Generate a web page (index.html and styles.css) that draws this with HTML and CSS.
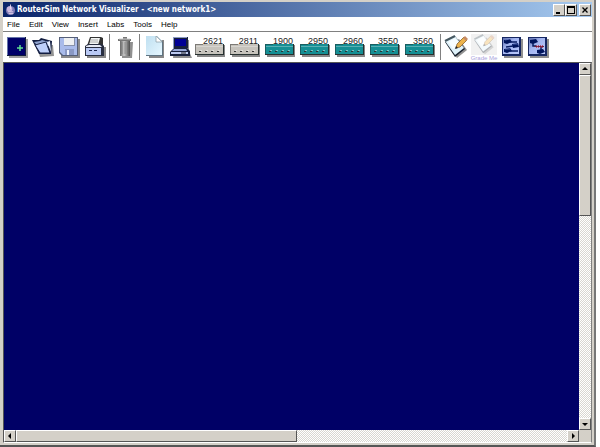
FILE: index.html
```html
<!DOCTYPE html>
<html lang="en">
<head>
<meta charset="utf-8">
<title>RouterSim Network Visualizer</title>
<link rel="stylesheet" href="styles.css">
</head>
<body>
<svg class="defs" aria-hidden="true">
  <defs>
    <linearGradient id="tile" x1="0" y1="0" x2="1" y2="1"><stop offset="0" stop-color="#5f6fae"/><stop offset=".4" stop-color="#a3b5f0"/><stop offset="1" stop-color="#b9c8fa"/></linearGradient>
    <linearGradient id="metal" x1="0" x2="1"><stop offset="0" stop-color="#666"/><stop offset=".4" stop-color="#c8c8c8"/><stop offset="1" stop-color="#4c4c4c"/></linearGradient>
    <linearGradient id="sheet" x1="0" y1="0" x2="1" y2="1"><stop offset="0" stop-color="#bfdff0"/><stop offset="1" stop-color="#e6f7ff"/></linearGradient>
    <symbol id="router" viewBox="0 0 31 14">
      <path d="M2 2h28v12H2z" fill="#555" opacity=".7"/>
      <path d="M0 1h29v11H0z" fill="#26302f"/>
      <path d="M0 1h28v10H0z" fill="currentColor"/>
      <path d="M0 1h8v1H1v9H0z" fill="#222" opacity=".45"/>
      <path d="M1 3h27v1H1z" fill="#fff" opacity=".3"/>
      <path d="M4 8h2v1H4zM10 8h2v1h-2zM16 8h2v1h-2zM22 8h2v1h-2z" fill="#333"/>
      <path d="M5 7h2v1H5zM11 7h2v1h-2zM17 7h2v1h-2zM23 7h2v1h-2z" fill="#fff" opacity=".45"/>
    </symbol>
    <symbol id="notepad" viewBox="0 0 26 24">
      <path d="M5 10 16 4l8 11-10 8z" fill="#555" opacity=".65"/>
      <path d="M2 7 12 1l10 13-10 8z" fill="#17202c"/>
      <path d="M2 6 12 1l9 12-9 7z" fill="#dff2fa"/>
      <path d="M5 7 12 3l5 6-7 5z" fill="#f7fdff"/>
      <path d="M2 6 12 1" stroke="#455760" stroke-width="2"/>
      <path d="m13 13 1-4 7-7 3 3-7 7z" fill="#edb34b" stroke="#78501d" stroke-width=".7"/>
      <path d="m12 14 1-3 2 2z" fill="#222"/>
      <path d="m20 3 2-2 3 3-2 2z" fill="#c58a64"/>
    </symbol>
  </defs>
</svg>
<div class="window">
  <header class="title-bar">
    <svg class="app-icon" viewBox="0 0 12 12" aria-hidden="true"><circle cx="6" cy="6.500" r="5" fill="#7d78b5"/><circle cx="5" cy="5" r="3" fill="#c9b6df"/><path d="M6 0v5M3 8h6M4 10h5" stroke="#e9d8ef"/></svg>
    <h1 class="title">RouterSim Network Visualizer - &lt;new network1&gt;</h1>
    <div class="window-buttons">
      <button class="key" aria-label="Minimize"><svg viewBox="0 0 8 8"><path d="M1 6h4v2H1z"/></svg></button>
      <button class="key" aria-label="Maximize"><svg viewBox="0 0 8 8"><path d="M0 0h8v8H0zm1 2v5h6V2z" fill-rule="evenodd"/></svg></button>
      <button class="key close" aria-label="Close"><svg viewBox="0 0 8 8"><path d="m1.500 1.500 5 5m0-5-5 5" stroke="#000" stroke-width="1.300"/></svg></button>
    </div>
  </header>
  <nav class="menu-bar">
    <button>File</button><button>Edit</button><button>View</button><button>Insert</button><button>Labs</button><button>Tools</button><button>Help</button>
  </nav>
  <div class="toolbar">
    <button class="tool" aria-label="New network"><svg viewBox="0 0 24 24"><path d="M4 4h19v19H4z" fill="#777" opacity=".7"/><path d="M2 2h19v19H2z" fill="#111b3d"/><path d="M2 2h18v18H2z" fill="#6473a8"/><path d="M3 3h17v17H3z" fill="#000068"/><path d="M12 13h6M15 10v6" stroke="#5fe093" stroke-width="1.500"/></svg></button>
    <button class="tool" aria-label="Open"><svg viewBox="0 0 24 24"><path d="m5 8 17 2 1 11-14 1z" fill="#666" opacity=".7"/><path d="M1 5h7l2-2 11 3-1 13H8z" fill="#111d40"/><path d="m3 7 6-1 2-1 7 2v4H7z" fill="#8fa3cf"/><path d="m4 10 11-3 4 11H9z" fill="#bed0fa" stroke="#151f42" stroke-width="1"/><path d="m16 7 3-1 1 11z" fill="#eaf1ff"/></svg></button>
    <button class="tool" aria-label="Save"><svg viewBox="0 0 24 24"><path d="M4 4h19v19H4z" fill="#666" opacity=".75"/><path d="M2 2h19v19H5l-3-3z" fill="#555f78"/><path d="M3 3h17v17H6l-3-3z" fill="#a9bbea"/><path d="M7 3h10v8H7z" fill="#eef0f2"/><path d="M7 10h10v1H7zM17 3h1v8h-1z" fill="#8791aa"/><path d="M8 14h9v6H8z" fill="#8a99c4"/><path d="M10 15h2v5h-2z" fill="#edf2ff"/></svg></button>
    <button class="tool" aria-label="Print"><svg viewBox="0 0 24 24"><path d="M4 12h19v11H4z" fill="#555" opacity=".7"/><path d="M7 2h11l2 1v8H4z" fill="#333"/><path d="M8 3h9l-2 7H6z" fill="#f3f6f5"/><path d="M8 5h7M7 7h8" stroke="#aaa"/><path d="m2 11 3-2h14l2 2v10H2z" fill="#282e41"/><path d="m3 11 3-1h11l2 2H3z" fill="#e5e9f4"/><path d="M3 13h15v7H3z" fill="#b9c9f4"/><path d="M6 15h3v1H6zM11 15h3v1h-3z" fill="#18234c"/></svg></button>
    <span class="divider"></span>
    <button class="tool" aria-label="Delete"><svg viewBox="0 0 24 24"><path d="M9 7h11l-1 16H9z" fill="#555" opacity=".65"/><path d="M7 5h10v16H7z" fill="url(#metal)"/><path d="M5 4h5V2h4v2h4v2H5z" fill="#777"/><path d="M6 4h11" stroke="#ccc"/><path d="M9 7v12M12 7v12M15 7v12" stroke="#666" stroke-width=".5"/></svg></button>
    <span class="divider"></span>
    <button class="tool" aria-label="New page"><svg viewBox="0 0 24 24"><path d="M6 5h15v18H6z" fill="#555" opacity=".7"/><path d="M3 1h11l6 6v14H3z" fill="#5f7482"/><path d="M3 1h11l5 5v14H3z" fill="url(#sheet)"/><path d="M13 1v6h6z" fill="#fff" stroke="#8798a0" stroke-width=".7"/></svg></button>
    <button class="tool" aria-label="Host"><svg viewBox="0 0 24 24"><path d="M6 5h14v11l3 7H4z" fill="#555" opacity=".65"/><path d="M4 2h15v11H4z" fill="#17203d"/><path d="M4 2h14v1H5v10H4z" fill="#8b9ac4"/><path d="M6 4h11v7H6z" fill="#000094"/><path d="M5 13h13l3 3v5H1v-4z" fill="#17203d"/><path d="M5 14h12l1 2H3z" fill="#93a4d5"/><path d="M2 17h17v2H2z" fill="#bdcaf0"/><path d="M12 18h5" stroke="#222"/></svg></button>
    <button class="device gray"><span>2621</span><svg><use href="#router"/></svg></button>
    <button class="device gray"><span>2811</span><svg><use href="#router"/></svg></button>
    <button class="device"><span>1900</span><svg><use href="#router"/></svg></button>
    <button class="device"><span>2950</span><svg><use href="#router"/></svg></button>
    <button class="device"><span>2960</span><svg><use href="#router"/></svg></button>
    <button class="device"><span>3550</span><svg><use href="#router"/></svg></button>
    <button class="device"><span>3560</span><svg><use href="#router"/></svg></button>
    <span class="divider"></span>
    <button class="tool pad" aria-label="Notes"><svg><use href="#notepad"/></svg></button>
    <button class="grade" disabled><svg aria-hidden="true"><use href="#notepad"/></svg><span>Grade Me</span></button>
    <button class="tool" aria-label="Connections"><svg viewBox="0 0 24 24"><path d="M4 4h19v19H4z" fill="#555" opacity=".65"/><path d="M2 2h19v19H2z" fill="#162762"/><path d="M3 3h16v16H3z" fill="url(#tile)"/><path d="m4 5 6-1 2 3-5 2-3-1zM12 9l6-1 1 4-6 1zM4 14l6-1 2 3-5 2-3-1z" fill="#00145c"/><path d="M9 7h8M6 12l7-1M10 16h8" fill="none" stroke="#071b60" stroke-width="1.500"/><path d="m5 5 5-1M13 9h5M5 14h5" stroke="#7890d8" stroke-width=".6"/></svg></button>
    <button class="tool" aria-label="Remove connection"><svg viewBox="0 0 24 24"><path d="M4 4h19v19H4z" fill="#555" opacity=".65"/><path d="M2 2h19v19H2z" fill="#162762"/><path d="M3 3h16v16H3z" fill="url(#tile)"/><path d="m4 5 6-1 2 3-5 2-3-1zM11 15l6-1 2 3-5 2-3-1z" fill="#00145c"/><path d="M7 8v3h3M15 12v3" fill="none" stroke="#071b60" stroke-width="1.500"/><path d="M8 11.500h10" stroke="#642441"/><path d="m10 10 3 3m0-3-3 3m4-3 3 3m0-3-3 3" stroke="#bf2439" stroke-width=".7"/></svg></button>
  </div>
  <main class="workspace">
    <div class="canvas"></div>
    <div class="scroll vertical">
      <button class="key" aria-label="Scroll up"><svg viewBox="0 0 8 8"><path d="m1 5 3-3 3 3z"/></svg></button>
      <div class="track"><div class="thumb"></div></div>
      <button class="key" aria-label="Scroll down"><svg viewBox="0 0 8 8"><path d="m1 3 3 3 3-3z"/></svg></button>
    </div>
    <div class="scroll horizontal">
      <button class="key" aria-label="Scroll left"><svg viewBox="0 0 8 8"><path d="M5 1 2 4l3 3z"/></svg></button>
      <div class="track"><div class="thumb"></div></div>
      <button class="key" aria-label="Scroll right"><svg viewBox="0 0 8 8"><path d="m3 1 3 3-3 3z"/></svg></button>
    </div>
    <div class="corner"></div>
  </main>
</div>
</body>
</html>
```
FILE: styles.css
```css
* { box-sizing: border-box; }

body {
  margin: 0;
  background: #fff;
  font-family: "Liberation Sans", sans-serif;
  font-size: 8px;
}

button {
  margin: 0;
  padding: 0;
  border: 0;
  background: none;
  color: #000;
  font: inherit;
}

svg { display: block; }

.defs {
  position: absolute;
  width: 0;
  height: 0;
}

.window {
  display: flex;
  flex-direction: column;
  min-height: 100vh;
  margin-right: 4px;
  padding: 2px 2px 2px 3px;
  background: #d4d0c8;
  border-right: 2px solid #777;
  border-bottom: 2px solid #555;
}

.title-bar {
  display: flex;
  align-items: center;
  height: 15px;
  padding: 0 1px 0 2px;
  background: linear-gradient(90deg, #0a246a, #a6caf0);
}

.app-icon {
  width: 11px;
  height: 12px;
}

.title {
  flex: 1;
  margin: 0 0 0 1px;
  color: #fff;
  font-family: "DejaVu Sans Condensed", Roboto, sans-serif;
  font-size: 8px;
  font-weight: bold;
  line-height: 15px;
  white-space: nowrap;
}

.window-buttons { display: flex; }

.key {
  display: grid;
  flex: none;
  place-items: center;
  width: 12px;
  height: 12px;
  background: #d4d0c8;
  border: 1px solid;
  border-color: #fff #555 #555 #fff;
}

.key svg {
  width: 8px;
  height: 8px;
}

.close { margin-left: 2px; }

.menu-bar {
  display: flex;
  gap: 9px;
  height: 15px;
  padding-left: 4px;
  background: #fff;
  border-bottom: 1px solid #808080;
}

.toolbar {
  display: flex;
  align-items: center;
  height: 30px;
  padding-left: 1px;
  background: #fff;
}

.tool {
  display: grid;
  flex: none;
  place-items: center;
  width: 26px;
}

.tool svg {
  width: 24px;
  height: 24px;
}

.divider {
  flex: none;
  width: 1px;
  height: 26px;
  margin: 0 2px 0 1px;
  background: #808080;
}

.device {
  display: flex;
  flex: none;
  flex-direction: column;
  width: 35px;
  padding-left: 1px;
  color: #158f94;
}

.device span {
  z-index: 1;
  align-self: flex-end;
  margin-right: 6px;
  color: #222;
  font-size: 9px;
  line-height: 8px;
}

.device svg {
  width: 31px;
  height: 14px;
  margin-top: -2px;
}

.gray { color: #c6c3bc; }

.tool.pad svg { width: 26px; }

.grade {
  display: flex;
  flex: none;
  flex-direction: column;
  align-items: center;
  width: 30px;
  color: #a9a4dc;
  font-size: 6px;
  line-height: 6px;
  white-space: nowrap;
}

.grade svg {
  width: 26px;
  height: 21px;
  background: #d8d8d8;
  opacity: .35;
}

.workspace {
  display: grid;
  flex: 1;
  grid-template: minmax(0, 1fr) 12px / minmax(0, 1fr) 12px;
  border: 1px solid;
  border-color: #555 #808080 #fff #555;
}

.canvas { background: #000066; }

.scroll { display: flex; }

.vertical { flex-direction: column; }

.track {
  flex: 1;
  background: repeating-conic-gradient(#d9d7d1 0 25%, #fff 0 50%) 0 0 / 2px 2px;
}

.thumb {
  background: #d4d0c8;
  border: 1px solid;
  border-color: #fff #555 #555 #fff;
}

.vertical .thumb { height: 41%; }

.horizontal .thumb {
  width: 51%;
  height: 100%;
}

.corner { background: #d4d0c8; }
```
